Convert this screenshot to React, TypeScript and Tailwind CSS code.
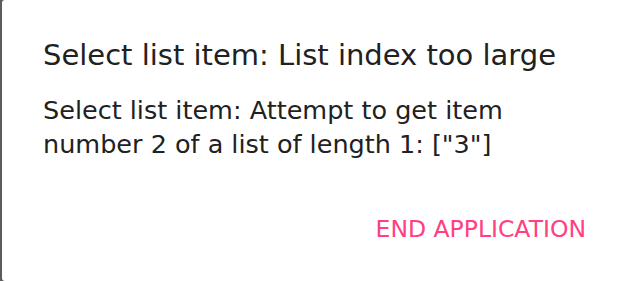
export default function App() {
  return (
    <div className="flex h-[281px] w-[625px] bg-[#5c5c5c]" style={{ fontFamily: '"DejaVu Sans", sans-serif' }}>
      <div className="ml-[2px] flex flex-1 flex-col rounded-l-[3px] bg-white pl-[41px] pr-[39px]">
        <h2 className="mt-[37px] whitespace-nowrap text-[29px] leading-[36px] text-[#212121]">
          Select list item: List index too large
        </h2>
        <p className="mt-[20px] text-[25.5px] leading-[34px] text-[#212121]">
          Select list item: Attempt to get item number 2 of a list of length 1: ["3"]
        </p>
        <div className="mt-[54px] flex justify-end">
          <button className="text-[23.5px] leading-[28px] text-[#ff4081]">END APPLICATION</button>
        </div>
      </div>
    </div>
  )
}
